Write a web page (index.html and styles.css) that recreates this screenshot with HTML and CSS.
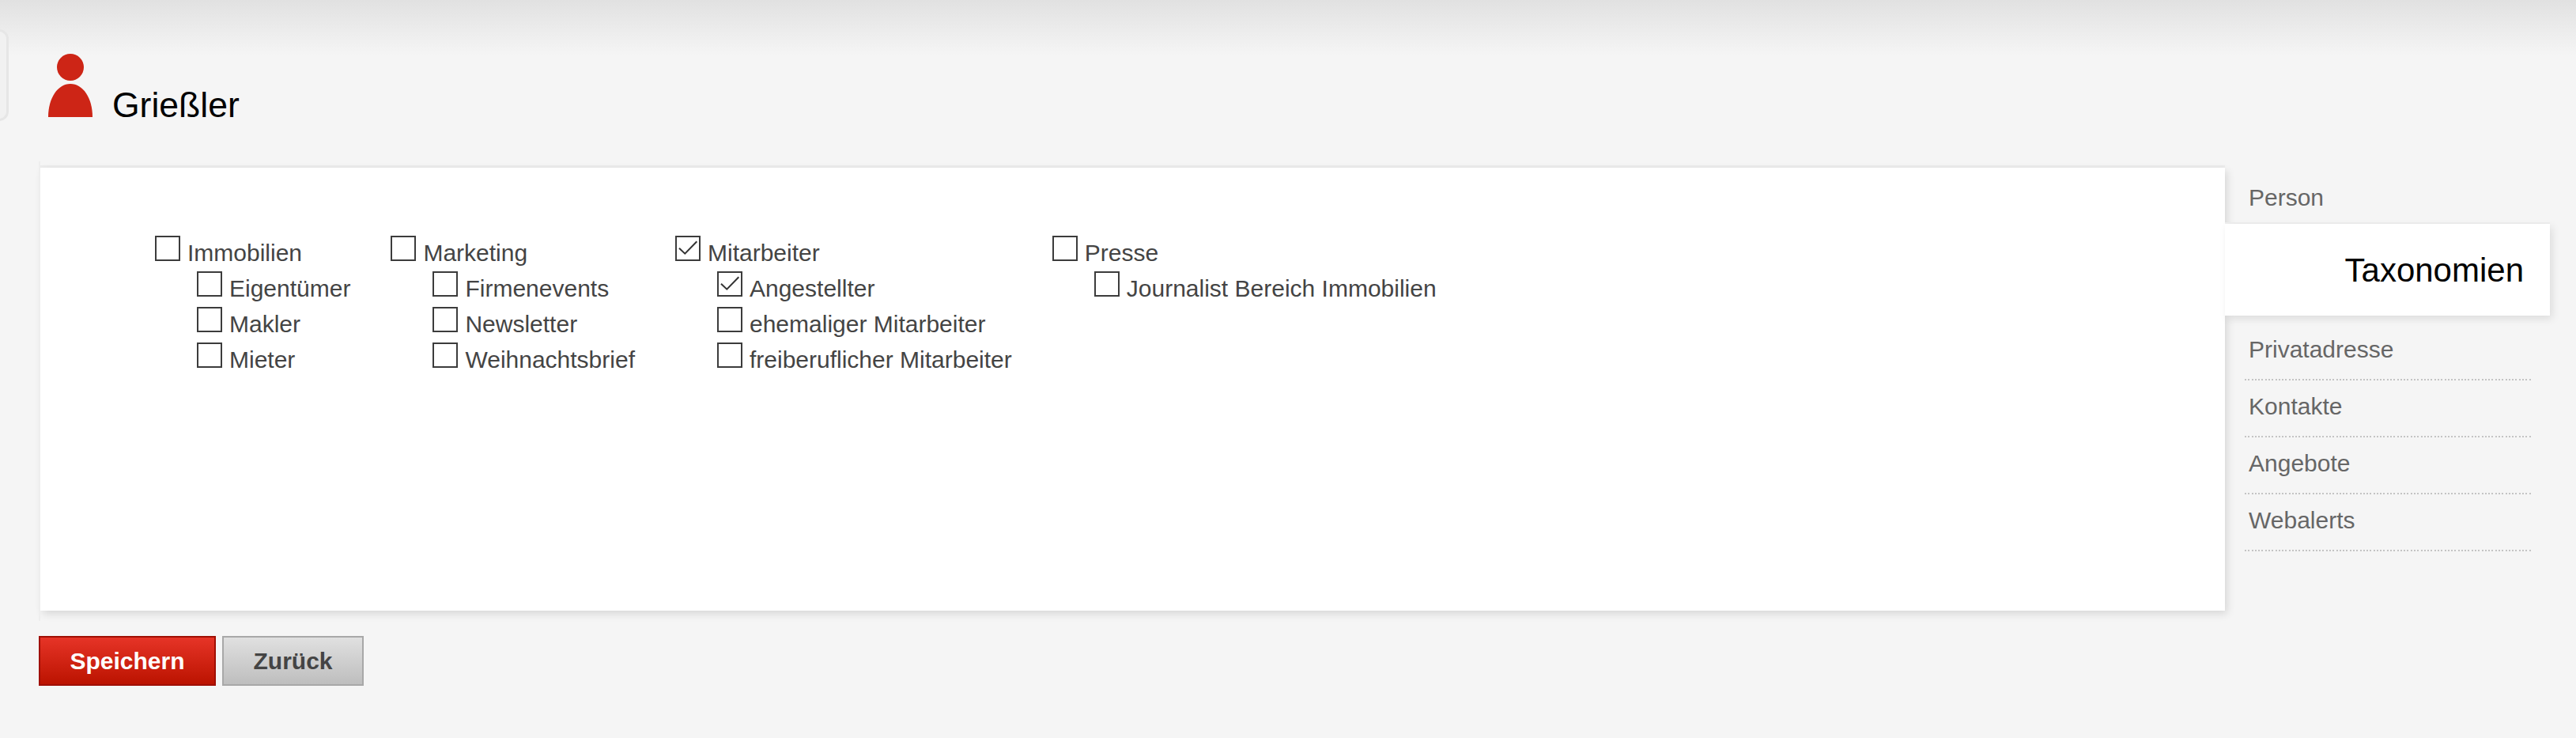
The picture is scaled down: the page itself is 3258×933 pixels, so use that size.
FILE: index.html
```html
<!DOCTYPE html>
<html lang="de">
<head>
    <meta charset="UTF-8">
    <meta name="viewport" content="width=device-width, initial-scale=1.0">
    <title>Grießler - Taxonomien</title>
    <link rel="stylesheet" href="styles.css">
</head>
<body>
    <div class="top-shade"></div>
    <div class="side-handle"></div>

    <div class="title-row">
        <svg class="person-icon" width="56" height="82" viewBox="0 0 56 82">
            <circle cx="28" cy="17" r="17" fill="#cd2516"/>
            <path d="M0 80C0 56 12 38 28 38C44 38 56 56 56 80Z" fill="#cd2516"/>
        </svg>
        <h1>Grießler</h1>
    </div>

    <div class="main-row">
        <div class="panel">
            <form class="tree">
                <ul class="group">
                    <li class="item"><span class="box"></span>Immobilien</li>
                    <li class="item sub"><span class="box"></span>Eigentümer</li>
                    <li class="item sub"><span class="box"></span>Makler</li>
                    <li class="item sub"><span class="box"></span>Mieter</li>
                </ul>
                <ul class="group">
                    <li class="item"><span class="box"></span>Marketing</li>
                    <li class="item sub"><span class="box"></span>Firmenevents</li>
                    <li class="item sub"><span class="box"></span>Newsletter</li>
                    <li class="item sub"><span class="box"></span>Weihnachtsbrief</li>
                </ul>
                <ul class="group">
                    <li class="item"><span class="box"><svg width="28" height="28" viewBox="0 0 28 28"><path d="M3 13.7L10.3 20.7L25.3 5.3" fill="none" stroke="#333" stroke-width="2"/></svg></span>Mitarbeiter</li>
                    <li class="item sub"><span class="box"><svg width="28" height="28" viewBox="0 0 28 28"><path d="M3 13.7L10.3 20.7L25.3 5.3" fill="none" stroke="#333" stroke-width="2"/></svg></span>Angestellter</li>
                    <li class="item sub"><span class="box"></span>ehemaliger Mitarbeiter</li>
                    <li class="item sub"><span class="box"></span>freiberuflicher Mitarbeiter</li>
                </ul>
                <ul class="group">
                    <li class="item"><span class="box"></span>Presse</li>
                    <li class="item sub"><span class="box"></span>Journalist Bereich Immobilien</li>
                </ul>
            </form>
        </div>
        <ul class="side-menu">
            <li class="side-item">Person</li>
            <li class="side-item active">Taxonomien</li>
            <li class="side-item">Privatadresse</li>
            <li class="side-item">Kontakte</li>
            <li class="side-item">Angebote</li>
            <li class="side-item">Webalerts</li>
        </ul>
    </div>

    <div class="actions">
        <button class="btn btn-red" type="button">Speichern</button>
        <button class="btn btn-grey" type="button">Zurück</button>
    </div>
</body>
</html>
```
FILE: styles.css
```css
html, body {
    margin: 0;
    padding: 0;
    height: 933px;
    overflow: hidden;
}
body {
    position: relative;
    background-color: #f5f5f5;
    font-family: "Liberation Sans", Arial, sans-serif;
    padding: 0 0 0 51px;
    box-sizing: border-box;
}
ul {
    list-style-type: none;
    margin: 0;
    padding: 0;
}
.top-shade {
    position: absolute;
    left: 0;
    top: 0;
    width: 100%;
    height: 70px;
    background: linear-gradient(#e1e1e1, #f5f5f5);
}
.side-handle {
    position: absolute;
    left: -23px;
    top: 37px;
    width: 28px;
    height: 110px;
    border: 3px solid #e6e6e6;
    border-radius: 12px;
    background-color: #f1f1f1;
}
.title-row {
    position: relative;
    display: flex;
    align-items: flex-start;
    height: 212px;
    padding-left: 10px;
    box-sizing: border-box;
    padding-top: 68px;
}
.person-icon {
    display: block;
}
h1 {
    margin: 36px 0 0 25px;
    font-size: 44.5px;
    line-height: 58px;
    font-weight: normal;
    color: #000;
}
.main-row {
    display: flex;
    align-items: flex-start;
}
.panel {
    position: relative;
    width: 2763px;
    height: 560px;
    background-color: #fff;
    box-shadow: 3px 4px 10px rgba(0, 0, 0, 0.12), 0 -3px 0 #ececec;
    padding: 86px 0 0 145px;
    box-sizing: border-box;
}
/* thin strip down the left edge, runs a bit past the panel */
.panel::before {
    content: "";
    position: absolute;
    left: -2px;
    top: -8px;
    bottom: -13px;
    width: 2px;
    background-color: #eeeeee;
}
.tree {
    display: flex;
    gap: 51px;
}
.item {
    display: flex;
    height: 45px;
    font-size: 30px;
    color: #444;
    white-space: nowrap;
    line-height: 43px;
}
.sub {
    padding-left: 53px;
}
.box {
    display: block;
    width: 32px;
    height: 32px;
    box-sizing: border-box;
    border: 2px solid #3c3c3c;
    background-color: #fff;
    margin-right: 9px;
}
.box svg {
    display: block;
}
.side-menu {
    width: 387px;
    padding: 5px 0 0 25px;
    box-sizing: border-box;
}
.side-item {
    height: 72px;
    line-height: 66px;
    font-size: 30px;
    color: #666;
    width: 362px;
    box-sizing: border-box;
    padding-left: 5px;
    /* square dots, the browser's dotted border draws round ones */
    background: repeating-linear-gradient(90deg, #c4c4c4 0, #c4c4c4 2px, transparent 2px, transparent 4.28px) left bottom / 100% 2px no-repeat;
}
.side-item.active {
    position: relative;
    width: 411px;
    height: 116px;
    line-height: 117px;
    margin: -6px 0 10px -25px;
    padding: 0 33px 0 0;
    text-align: right;
    font-size: 42px;
    color: #000;
    background: #fff;
    box-shadow: 3px 4px 10px rgba(0, 0, 0, 0.1), 0 -2px 0 #eeeeee;
}
.actions {
    display: flex;
    gap: 8px;
    margin: 32px 0 0 -2px;
}
.btn {
    height: 63px;
    font-family: "Liberation Sans", Arial, sans-serif;
    font-size: 30px;
    font-weight: bold;
    padding: 0;
    border-width: 2px;
    border-style: solid;
}
.btn-red {
    width: 224px;
    color: #fff;
    border-color: #a00f04;
    background: linear-gradient(#e63427, #bb1300);
}
.btn-grey {
    width: 179px;
    color: #444;
    border-color: #a8a8a8;
    background: linear-gradient(#e0e0e0, #bebebe);
}
```
